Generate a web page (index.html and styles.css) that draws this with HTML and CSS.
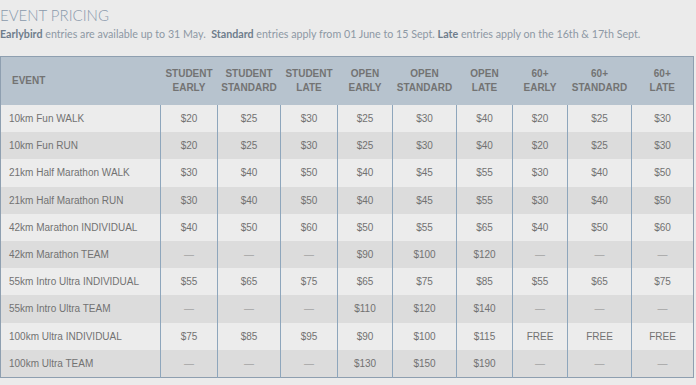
FILE: index.html
```html
<!DOCTYPE html>
<html lang="en">
<head>
  <meta charset="UTF-8">
  <title>Event Pricing</title>
  <link rel="stylesheet" href="styles.css">
</head>
<body>

<div class="pricing-section">
  <h2 class="title">EVENT PRICING</h2>
  <p class="note"><strong>Earlybird</strong> entries are available up to 31 May. &nbsp;<strong>Standard</strong> entries apply from 01 June to 15 Sept. <strong>Late</strong> entries apply on the 16th &amp; 17th Sept.</p>

  <table class="pricing">
    <colgroup>
      <col class="c-event">
      <col style="width:57px"><col style="width:63px"><col style="width:57px">
      <col style="width:55px"><col style="width:64px"><col style="width:56px">
      <col style="width:55px"><col style="width:64px"><col style="width:62px">
    </colgroup>
    <thead>
      <tr>
        <th class="event">EVENT</th>
        <th>STUDENT<br>EARLY</th>
        <th>STUDENT<br>STANDARD</th>
        <th>STUDENT<br>LATE</th>
        <th>OPEN<br>EARLY</th>
        <th>OPEN<br>STANDARD</th>
        <th>OPEN<br>LATE</th>
        <th>60+<br>EARLY</th>
        <th>60+<br>STANDARD</th>
        <th>60+<br>LATE</th>
      </tr>
    </thead>
    <tbody>
      <tr>
        <td>10km Fun WALK</td>
        <td>$20</td><td>$25</td><td>$30</td>
        <td>$25</td><td>$30</td><td>$40</td>
        <td>$20</td><td>$25</td><td>$30</td>
      </tr>
      <tr>
        <td>10km Fun RUN</td>
        <td>$20</td><td>$25</td><td>$30</td>
        <td>$25</td><td>$30</td><td>$40</td>
        <td>$20</td><td>$25</td><td>$30</td>
      </tr>
      <tr>
        <td>21km Half Marathon WALK</td>
        <td>$30</td><td>$40</td><td>$50</td>
        <td>$40</td><td>$45</td><td>$55</td>
        <td>$30</td><td>$40</td><td>$50</td>
      </tr>
      <tr>
        <td>21km Half Marathon RUN</td>
        <td>$30</td><td>$40</td><td>$50</td>
        <td>$40</td><td>$45</td><td>$55</td>
        <td>$30</td><td>$40</td><td>$50</td>
      </tr>
      <tr>
        <td>42km Marathon INDIVIDUAL</td>
        <td>$40</td><td>$50</td><td>$60</td>
        <td>$50</td><td>$55</td><td>$65</td>
        <td>$40</td><td>$50</td><td>$60</td>
      </tr>
      <tr>
        <td>42km Marathon TEAM</td>
        <td class="none">—</td><td class="none">—</td><td class="none">—</td>
        <td>$90</td><td>$100</td><td>$120</td>
        <td class="none">—</td><td class="none">—</td><td class="none">—</td>
      </tr>
      <tr>
        <td>55km Intro Ultra INDIVIDUAL</td>
        <td>$55</td><td>$65</td><td>$75</td>
        <td>$65</td><td>$75</td><td>$85</td>
        <td>$55</td><td>$65</td><td>$75</td>
      </tr>
      <tr>
        <td>55km Intro Ultra TEAM</td>
        <td class="none">—</td><td class="none">—</td><td class="none">—</td>
        <td>$110</td><td>$120</td><td>$140</td>
        <td class="none">—</td><td class="none">—</td><td class="none">—</td>
      </tr>
      <tr>
        <td>100km Ultra INDIVIDUAL</td>
        <td>$75</td><td>$85</td><td>$95</td>
        <td>$90</td><td>$100</td><td>$115</td>
        <td>FREE</td><td>FREE</td><td>FREE</td>
      </tr>
      <tr>
        <td>100km Ultra TEAM</td>
        <td class="none">—</td><td class="none">—</td><td class="none">—</td>
        <td>$130</td><td>$150</td><td>$190</td>
        <td class="none">—</td><td class="none">—</td><td class="none">—</td>
      </tr>
    </tbody>
  </table>
</div>

</body>
</html>
```

FILE: styles.css
```css
/* Pricing page */
body {
  margin: 0;
  padding: 0;
  background-color: #ebebeb;
  font-family: "Liberation Sans", Arial, sans-serif;
}
.pricing-section {
  width: 694px;
}
.title {
  margin: 0;
  padding-top: 7px;
  font-family: Lato, "Open Sans", sans-serif;
  font-weight: 300;
  font-size: 15px;
  line-height: 17px;
  color: #8a9aab;
}
.note {
  margin: 3px 0 15px;
  font-family: Lato, "Open Sans", sans-serif;
  font-size: 10.7px;
  line-height: 14px;
  color: #8d98a4;
}
.note strong {
  font-weight: bold;
  color: #6e7d8c;
}
.pricing {
  width: 694px;
  border-collapse: collapse;
  table-layout: fixed;
  border: 1px solid #8e9fb0;
  font-size: 10px;
  color: #727272;
}
.c-event {
  width: 160px;
}
.pricing th {
  height: 48px;
  padding: 0 2px;
  background-color: #b7c3ce;
  color: #737373;
  font-weight: bold;
  line-height: 14px;
  text-align: center;
}
.pricing th.event {
  text-align: left;
  padding-left: 11px;
}
.pricing td {
  height: 27.2px;
  padding: 0 2px;
  text-align: center;
  border-left: 1px solid #8ea6bc;
  background-color: #ececec;
}
.pricing td:first-child {
  text-align: left;
  padding-left: 8px;
  border-left: none;
}
.pricing tbody tr:nth-child(even) td {
  background-color: #dcdcdc;
}
.pricing td.none {
  color: #a3a3a3;
}
```
